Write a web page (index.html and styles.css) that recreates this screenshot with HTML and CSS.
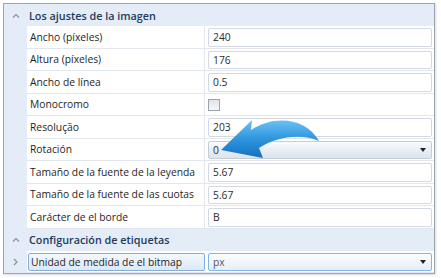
FILE: index.html
```html
<!DOCTYPE html>
<html lang="es">
<head>
    <meta charset="UTF-8">
    <meta name="viewport" content="width=device-width, initial-scale=1.0">
    <title>Propiedades</title>
    <link rel="stylesheet" href="styles.css">
</head>
<body>
<div class="grid">
    <!-- Section: image settings -->
    <div class="cat">
        <span class="gut"><svg width="8" height="5" viewBox="0 0 8 5"><path d="M1 4.5 L4 1.5 L7 4.5" fill="none" stroke="#8593a6" stroke-width="1.2"/></svg></span>
        Los ajustes de la imagen
    </div>
    <div class="row"><div class="gut"></div><div class="label">Ancho (píxeles)</div><div class="value"><div class="box">240</div></div></div>
    <div class="row"><div class="gut"></div><div class="label">Altura (píxeles)</div><div class="value"><div class="box">176</div></div></div>
    <div class="row"><div class="gut"></div><div class="label">Ancho de línea</div><div class="value"><div class="box">0.5</div></div></div>
    <div class="row"><div class="gut"></div><div class="label">Monocromo</div><div class="value plain"><span class="check"></span></div></div>
    <div class="row"><div class="gut"></div><div class="label">Resolução</div><div class="value"><div class="box">203</div></div></div>
    <div class="row"><div class="gut"></div><div class="label">Rotación</div><div class="value"><div class="box combo">0<span class="caret"></span></div></div></div>
    <div class="row"><div class="gut"></div><div class="label">Tamaño de la fuente de la leyenda</div><div class="value"><div class="box">5.67</div></div></div>
    <div class="row"><div class="gut"></div><div class="label">Tamaño de la fuente de las cuotas</div><div class="value"><div class="box">5.67</div></div></div>
    <div class="row"><div class="gut"></div><div class="label">Carácter de el borde</div><div class="value"><div class="box">B</div></div></div>

    <!-- Section: labels -->
    <div class="cat">
        <span class="gut"><svg width="8" height="5" viewBox="0 0 8 5"><path d="M1 4.5 L4 1.5 L7 4.5" fill="none" stroke="#8593a6" stroke-width="1.2"/></svg></span>
        Configuración de etiquetas
    </div>
    <div class="row last">
        <div class="gut"><svg width="5" height="8" viewBox="0 0 5 8"><path d="M1 1 L4 4 L1 7" fill="none" stroke="#8593a6" stroke-width="1.2"/></svg></div>
        <div class="label"><div class="sel">Unidad de medida de el bitmap</div></div>
        <div class="value"><div class="box combo active">px<span class="caret"></span></div></div>
    </div>

    <!-- callout arrow over the Rotación row -->
    <svg class="callout" width="110" height="50" viewBox="215 112 110 50">
        <defs>
            <linearGradient id="ag" x1="0" y1="0" x2="0" y2="1">
                <stop offset="0" stop-color="#6cc2f4"/>
                <stop offset="0.5" stop-color="#2e95de"/>
                <stop offset="1" stop-color="#1570c0"/>
            </linearGradient>
        </defs>
        <path d="M221 150 L252 120 L251 130 C273 115 306 117 319 141 C300 133 276 137 259 148 L263 158 Z" fill="url(#ag)"/>
    </svg>
</div>
</body>
</html>
```

FILE: styles.css
```css
body {
    margin: 0;
    padding: 3px 6px 4px 3px;
    background: #fff;
    font-family: "Open Sans", "Noto Sans", sans-serif;
    font-size: 10.3px;
    color: #1e1e1e;
}

.grid {
    position: relative;
    border: 1px solid #9aa5b2;
    box-shadow: 1px 1px 2px rgba(0, 0, 0, 0.15);
    background: #e4ecf7;
}

.gut {
    width: 23px;
    flex: none;
    display: flex;
    align-items: center;
    justify-content: center;
}

/* Category header */
.cat {
    height: 22px;
    display: flex;
    align-items: center;
    background: #e4ecf7;
    font-size: 10.8px;
    font-weight: 600;
    color: #1e3a5c;
    gap: 2px;
}

/* Property row */
.row {
    display: grid;
    grid-template-columns: 23px 178px 1fr;
    height: 22.5px;
}

.label {
    background: #fff;
    border-bottom: 1px solid #e2e7ee;
    border-right: 1px solid #e2e7ee;
    padding-left: 3px;
    display: flex;
    align-items: center;
    white-space: nowrap;
}

.value {
    background: #fff;
    border-bottom: 1px solid #e2e7ee;
    padding: 2px 2px 1px 3px;
    display: flex;
    align-items: stretch;
}

.value.plain {
    align-items: center;
}

.box {
    flex: 1;
    position: relative;
    display: flex;
    align-items: center;
    padding-left: 4px;
    border: 1px solid #d2d9e2;
    border-radius: 2px;
    background: #fff;
    color: #2b2b2b;
}

.combo {
    background: linear-gradient(#fbfcfd, #e9eef4 50%, #dde4ed);
    border-color: #c3ccd7;
}

.caret {
    position: absolute;
    right: 5px;
    top: 50%;
    margin-top: -2px;
    border-left: 3.5px solid transparent;
    border-right: 3.5px solid transparent;
    border-top: 4px solid #222;
}

.check {
    width: 10px;
    height: 10px;
    border: 1px solid #9aa3ae;
    background: linear-gradient(#dfe3e8, #f7f8fa);
}

/* Selected row */
.last .label {
    padding: 2px 0 1px 1px;
    border-right: none;
    align-items: stretch;
}

.sel {
    flex: 1;
    display: flex;
    align-items: center;
    padding-left: 2px;
    border: 1px solid #86aedb;
    border-radius: 2px;
    background: linear-gradient(#f3f8fe, #dde9f8);
}

.combo.active {
    border-color: #7fb6ec;
    background: linear-gradient(#fbfdff, #e6eef8);
    color: #555;
}

.callout {
    position: absolute;
    left: 211px;
    top: 108px;
}
```
